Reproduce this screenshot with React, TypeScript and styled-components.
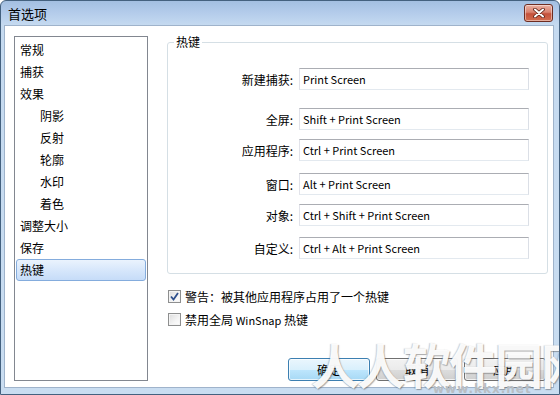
import React from "react";
import styled, { createGlobalStyle } from "styled-components";

const Global = createGlobalStyle`
  html, body { margin: 0; padding: 0; background: #fff; }
  body { font-family: "Noto Sans CJK SC", "Noto Sans", sans-serif; font-size: 12px; color: #000; }
  * { box-sizing: border-box; }
`;

const Window = styled.div`
  position: relative;
  width: 560px;
  height: 395px;
  border: 1px solid #44617f;
  border-radius: 6px 6px 0 0;
  background: linear-gradient(180deg, #a3bfe1 0px, #b4cceb 12px, #c5daf0 24px, #c9ddf1 100%);
  display: flex;
  flex-direction: column;
  overflow: hidden;
`;

const TitleBar = styled.div`
  height: 24px;
  padding: 0 6px 0 7px;
  display: flex;
  align-items: center;
  justify-content: space-between;
`;

const Title = styled.span`
  font-size: 13px;
  line-height: 16px;
  color: #000;
  margin-top: 1px;
`;

const CloseButton = styled.div`
  width: 29px;
  height: 18px;
  margin-top: -1px;
  border: 1px solid #6e2d22;
  border-radius: 3px;
  background: linear-gradient(180deg, #eab0a2 0%, #d9826f 45%, #c4513b 55%, #d36d4f 100%);
  box-shadow: inset 0 0 0 1px rgba(255, 255, 255, 0.45);
  display: flex;
  align-items: center;
  justify-content: center;
`;

const Client = styled.div`
  flex: 1;
  margin: 0 5px 6px 3px;
  border: 1px solid #9fb3cb;
  background: #fff;
  display: flex;
  padding: 10px 5px 6px 9px;
`;

const ListBox = styled.div`
  width: 134px;
  height: 345px;
  border: 1px solid #828790;
  background: #fff;
  padding: 2px 1px 0 1px;
  display: flex;
  flex-direction: column;
`;

const ListItem = styled.div<{ $indent?: boolean; $selected?: boolean }>`
  height: 22px;
  line-height: 20px;
  padding-left: ${(p) => (p.$indent ? "23px" : "3px")};
  border: 1px solid ${(p) => (p.$selected ? "#84acdd" : "transparent")};
  border-radius: 3px;
  background: ${(p) =>
    p.$selected ? "linear-gradient(180deg, #eaf3fd 0%, #d7e7fb 50%, #c6dcf8 100%)" : "transparent"};
`;

const Right = styled.div`
  flex: 1;
  margin-left: 19px;
  display: flex;
  flex-direction: column;
`;

const Group = styled.fieldset`
  margin: -2px 0 0 0;
  padding: 0 18px 14px 0;
  border: 1px solid #d5dfe5;
  border-radius: 3px;
  min-width: 0;
`;

const Legend = styled.legend`
  margin-left: 6px;
  padding: 0 2px;
  font-size: 12px;
  line-height: 16px;
`;

const Row = styled.div<{ $top: number }>`
  display: flex;
  align-items: center;
  margin-top: ${(p) => p.$top}px;
`;

const Label = styled.label`
  width: 125px;
  text-align: right;
  margin-right: 6px;
  white-space: nowrap;
`;

const TextBox = styled.div`
  width: 230px;
  height: 22px;
  border: 1px solid;
  border-color: #abadb3 #dbdfe6 #e3e9ef #e2e3ea;
  padding-left: 3px;
  line-height: 20px;
  font-size: 11px;
  background: #fff;
  white-space: nowrap;
`;

const CheckRow = styled.div<{ $top: number }>`
  display: flex;
  align-items: center;
  height: 16px;
  margin-top: ${(p) => p.$top}px;
  margin-left: 1px;
  gap: 4px;
  white-space: nowrap;
`;

const Box = styled.div`
  width: 13px;
  height: 13px;
  border: 1px solid #8e8f8f;
  background: linear-gradient(135deg, #dcdcdc 0%, #f4f4f4 60%, #fefefe 100%);
  box-shadow: inset 0 0 0 1px #f4f4f4;
  display: flex;
  align-items: center;
  justify-content: center;
`;

const Small = styled.span`
  font-size: 11px;
`;

const Buttons = styled.div`
  margin-top: auto;
  margin-right: 2px;
  display: flex;
  justify-content: flex-end;
  gap: 6px;
`;

const Button = styled.div<{ $default?: boolean }>`
  width: 82px;
  height: 23px;
  border: 1px solid ${(p) => (p.$default ? "#3c7fb1" : "#707070")};
  border-radius: 3px;
  background: ${(p) =>
    p.$default
      ? "linear-gradient(180deg, #eaf6fd 0%, #d9f0fc 50%, #bee6fd 51%, #a7d9f5 100%)"
      : "linear-gradient(180deg, #f2f2f2 0%, #ebebeb 50%, #dddddd 51%, #cfcfcf 100%)"};
  box-shadow: inset 0 0 0 1px rgba(255, 255, 255, 0.7);
  display: flex;
  align-items: center;
  justify-content: center;
`;

const Watermark = styled.div`
  position: absolute;
  left: 310px;
  top: 334px;
  font-size: 48px;
  font-weight: 700;
  letter-spacing: -2px;
  line-height: 56px;
  color: rgba(255, 255, 255, 0.95);
  text-shadow: 1px 1px 1px rgba(90, 90, 90, 0.5), -1px 0 1px rgba(90, 90, 90, 0.3);
  white-space: nowrap;
  pointer-events: none;
`;

const WatermarkUrl = styled.div`
  position: absolute;
  left: 432px;
  top: 381px;
  font-family: "DejaVu Sans", sans-serif;
  font-size: 12px;
  font-weight: 700;
  letter-spacing: 1px;
  color: #b9bec3;
  pointer-events: none;
`;

const items: { text: string; indent?: boolean }[] = [
  { text: "常规" },
  { text: "捕获" },
  { text: "效果" },
  { text: "阴影", indent: true },
  { text: "反射", indent: true },
  { text: "轮廓", indent: true },
  { text: "水印", indent: true },
  { text: "着色", indent: true },
  { text: "调整大小" },
  { text: "保存" },
  { text: "热键" },
];

const rows = [
  { label: "新建捕获:", value: "Print Screen", top: 18 },
  { label: "全屏:", value: "Shift + Print Screen", top: 18 },
  { label: "应用程序:", value: "Ctrl + Print Screen", top: 9 },
  { label: "窗口:", value: "Alt + Print Screen", top: 12 },
  { label: "对象:", value: "Ctrl + Shift + Print Screen", top: 9 },
  { label: "自定义:", value: "Ctrl + Alt + Print Screen", top: 11 },
];

export default function App() {
  return (
    <>
      <Global />
      <Window>
        <TitleBar>
          <Title>首选项</Title>
          <CloseButton>
            <svg width="12" height="10" viewBox="0 0 12 10">
              <path d="M2 1.5 L10 8.5 M10 1.5 L2 8.5" stroke="#5a1e14" strokeWidth="3.6" strokeLinecap="round" />
              <path d="M2 1.5 L10 8.5 M10 1.5 L2 8.5" stroke="#fff" strokeWidth="2" strokeLinecap="round" />
            </svg>
          </CloseButton>
        </TitleBar>
        <Client>
          <ListBox>
            {items.map((it) => (
              <ListItem key={it.text} $indent={it.indent} $selected={it.text === "热键"}>
                {it.text}
              </ListItem>
            ))}
          </ListBox>
          <Right>
            <Group>
              <Legend>热键</Legend>
              {rows.map((r) => (
                <Row key={r.label} $top={r.top}>
                  <Label>{r.label}</Label>
                  <TextBox>{r.value}</TextBox>
                </Row>
              ))}
            </Group>
            <CheckRow $top={14}>
              <Box>
                <svg width="9" height="9" viewBox="0 0 9 9">
                  <path d="M1 4.5 L3.5 7.5 L8 1" fill="none" stroke="#2d4f8c" strokeWidth="1.8" />
                </svg>
              </Box>
              <span>警告：被其他应用程序占用了一个热键</span>
            </CheckRow>
            <CheckRow $top={7}>
              <Box />
              <span>
                禁用全局 <Small>WinSnap</Small> 热键
              </span>
            </CheckRow>
            <Buttons>
              <Button $default>确定</Button>
              <Button>取消</Button>
              <Button>应用</Button>
            </Buttons>
          </Right>
        </Client>
        <Watermark>人人软件园网</Watermark>
        <WatermarkUrl>www.kkx.net</WatermarkUrl>
      </Window>
    </>
  );
}
